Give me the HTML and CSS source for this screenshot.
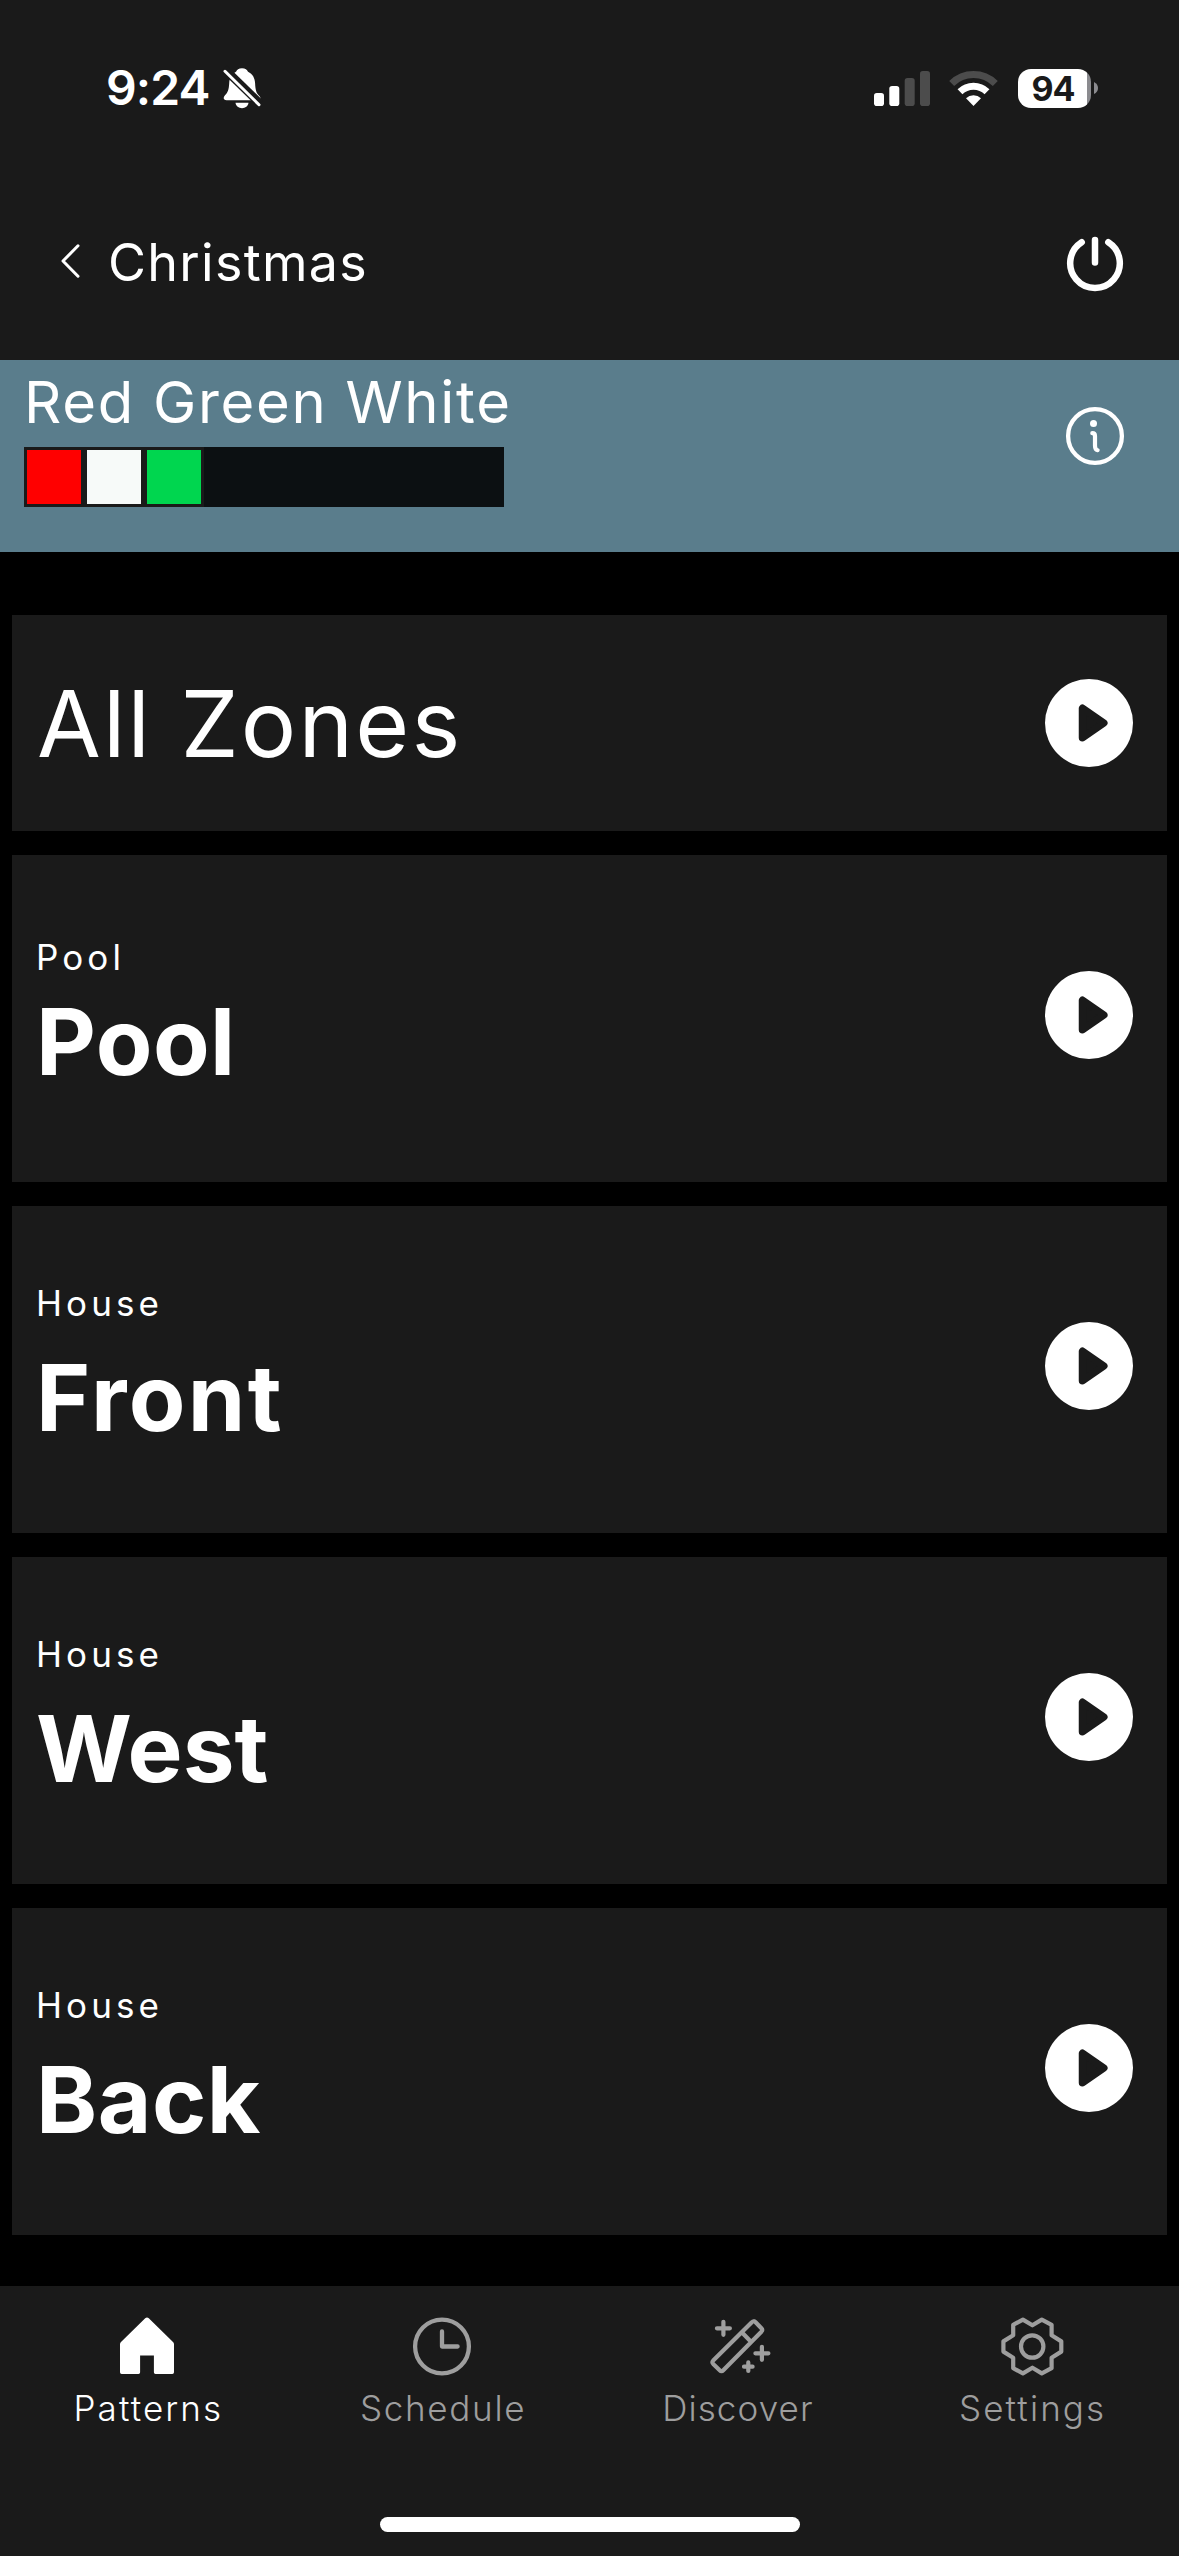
FILE: index.html
```
<!DOCTYPE html>
<html lang="en">
<head>
<meta charset="utf-8">
<title>Christmas – Red Green White</title>
<link rel="stylesheet" href="styles.css">
</head>
<body>
<svg class="defs" aria-hidden="true">
  <symbol id="play" viewBox="0 0 88 88">
    <circle cx="44" cy="44" r="44" fill="#fff"/>
    <path d="M37.500 29.300V58.700L58.800 44Z" fill="#1a1a1a" stroke="#1a1a1a" stroke-width="7.500" stroke-linejoin="round"/>
  </symbol>
</svg>
<div class="screen">
  <div class="status">
    <div class="status-left">
      <span class="time">9:24</span>
      <svg class="bell" viewBox="0 0 38 42">
        <path d="M19 1.2c3.200 0 5.400 1.500 6 3.600 4.700 2.200 6.800 6.300 7.100 11.400.3 7 1.300 9.800 3.800 12.300 2.800 2.900 1.500 4.800-1 4.800H3.600C.6 33.300-.2 30.800 1.800 28.600c2.700-2.800 4.100-5.600 4.400-12.400.3-5.100 2.300-9.200 6.800-11.400.7-2.100 2.800-3.600 6-3.600z" fill="#fff"/>
        <path d="M12.500 35.800h13c-.4 3.300-3.200 5.400-6.500 5.400s-6.100-2.100-6.500-5.400z" fill="#fff"/>
        <path d="M1 1.500L37 36.500" stroke="#1a1a1a" stroke-width="8.500"/>
        <path d="M2 4.300L36 37.700" stroke="#fff" stroke-width="3" stroke-linecap="round"/>
      </svg>
    </div>
    <div class="status-right">
      <svg class="signal" viewBox="0 0 56 35">
        <rect x="0" y="22" width="10" height="13" rx="2.800" fill="#fff"/>
        <rect x="15.300" y="15" width="10" height="20" rx="2.800" fill="#fff"/>
        <rect x="30.700" y="7" width="10" height="28" rx="2.800" fill="#4c4c4c"/>
        <rect x="46" y="0" width="10" height="35" rx="2.800" fill="#4c4c4c"/>
      </svg>
      <svg class="wifi" viewBox="0 0 49 35">
        <path d="M2.700 12.500a31 31 0 0 1 43.600 0" fill="none" stroke="#4c4c4c" stroke-width="7"/>
        <path d="M11 20.800a19.300 19.300 0 0 1 27 0" fill="none" stroke="#fff" stroke-width="7"/>
        <path d="M24.500 35L17 27.300a11 11 0 0 1 15 0z" fill="#fff"/>
      </svg>
      <div class="battery"><span class="level">94</span></div>
      <svg class="battery-cap" viewBox="0 0 4 12"><path d="M0 0q4 2 4 6t-4 6z" fill="#8b8b8f"/></svg>
    </div>
  </div>

  <header class="header">
    <svg class="back" viewBox="0 0 20 34"><path d="M18 .8L3 16l15 15.200" fill="none" stroke="#fff" stroke-width="3" stroke-linecap="round" stroke-linejoin="round"/></svg>
    <h1 class="title">Christmas</h1>
    <svg class="power" viewBox="0 0 58 58"><path d="M15.700 9.200a24.800 24.800 0 1 0 26.600 0M29 7V29.500" fill="none" stroke="#fff" stroke-width="6.500" stroke-linecap="round"/></svg>
  </header>

  <section class="banner">
    <div class="pattern">
      <h2 class="pattern-name">Red Green White</h2>
      <div class="swatches">
        <span class="swatch red"></span><span class="swatch white"></span><span class="swatch green"></span>
      </div>
    </div>
    <svg class="info" viewBox="0 0 58 58">
      <circle cx="29" cy="29" r="26.900" fill="none" stroke="#fff" stroke-width="4.300"/>
      <circle cx="27.500" cy="16.600" r="3.500" fill="#fff"/>
      <path d="M26.300 26.200q2.700 0 2.700 3v9.500q0 4 2.600 4.500" fill="none" stroke="#fff" stroke-width="4.200" stroke-linecap="round"/>
    </svg>
  </section>

  <main class="zones">
    <article class="zone all"><h3 class="all-name">All Zones</h3><svg class="play"><use href="#play"/></svg></article>
    <article class="zone"><div class="text tight"><p class="group">Pool</p><h3 class="name">Pool</h3></div><svg class="play"><use href="#play"/></svg></article>
    <article class="zone"><div class="text"><p class="group">House</p><h3 class="name front">Front</h3></div><svg class="play"><use href="#play"/></svg></article>
    <article class="zone"><div class="text"><p class="group">House</p><h3 class="name west">West</h3></div><svg class="play"><use href="#play"/></svg></article>
    <article class="zone"><div class="text"><p class="group">House</p><h3 class="name">Back</h3></div><svg class="play"><use href="#play"/></svg></article>
  </main>

  <footer class="footer">
    <nav class="tabs">
      <a class="tab active">
        <svg class="icon" viewBox="0 0 60 60"><path d="M28.200 2.200q1.800-1.600 3.600 0L56 26q1 1 1 2.200V56.300q0 1.700-1.700 1.700H38.500q-1.600 0-1.600-1.700V39.500H23.100V56.300q0 1.700-1.600 1.700H4.700Q3 58 3 56.300V28.200Q3 27 4 26z" fill="currentColor"/></svg>
        <span class="tab-label">Patterns</span>
      </a>
      <a class="tab">
        <svg class="icon" viewBox="0 0 60 60"><g fill="none" stroke="currentColor" stroke-width="4.300" stroke-linecap="round" stroke-linejoin="round"><circle cx="30" cy="30.500" r="26.900"/><path d="M30 15.400V30.500H45.600"/></g></svg>
        <span class="tab-label schedule">Schedule</span>
      </a>
      <a class="tab">
        <svg class="icon" viewBox="0 0 60 60"><g fill="none" stroke="currentColor" stroke-width="4.200" stroke-linecap="round" stroke-linejoin="round">
          <path d="M44.800 6.300q1.900-2.100 3.800-.1l5.800 6q1.600 1.700 0 3.500L16.300 54.200q-1.800 1.900-3.600 0L6.200 47.900q-1.500-1.600 0-3.300zM35.500 17l8 8.200"/>
          <path d="M16.400 5.800v13M9.900 12.300h13M54.900 30.800v13M48.400 37.300h13M41.300 46.400v8.600M37 50.700h8.600"/></g></svg>
        <span class="tab-label discover">Discover</span>
      </a>
      <a class="tab">
        <svg class="icon" viewBox="0 0 60 60"><g fill="none" stroke="currentColor" stroke-width="4.200" stroke-linecap="round" stroke-linejoin="round">
          <circle cx="30.200" cy="30.500" r="11.200"/>
          <path d="M20.900 3.600l9.500 5.700 9.400-5.700 9.800 5.200v10.500l9.700 6.100v10.200l-9.700 6.100v10.500l-9.800 5.200-9.400-5.700-9.500 5.700-9.700-5.200V41.700L1.400 35.600V25.400l9.800-6.100V8.800z"/></g></svg>
        <span class="tab-label">Settings</span>
      </a>
    </nav>
    <div class="home-indicator"></div>
  </footer>
</div>
</body>
</html>
```
FILE: styles.css
```
* { box-sizing: border-box; }
body, h1, h2, h3, p { margin: 0; }
body { background: #000; color: #fff; font-family: Inter, "Liberation Sans", sans-serif; }
svg { display: block; flex: none; overflow: visible; }
.defs { position: absolute; width: 0; height: 0; }

.screen { width: 1179px; height: 2556px; display: flex; flex-direction: column; background: #000; white-space: nowrap; }

.status { height: 164px; padding: 12px 81px 0 106px; display: flex; align-items: center; justify-content: space-between; background: #1a1a1a; }
.status-left, .status-right { display: flex; align-items: center; }
.time { width: 117px; font-size: 48px; line-height: 48px; font-weight: 600; letter-spacing: -0.9px; }
.bell { width: 38px; height: 42px; }
.signal { width: 56px; height: 35px; margin-right: 19px; }
.wifi { width: 49px; height: 35px; margin-right: 20px; }
.battery { width: 73px; height: 39px; margin-right: 3px; padding-right: 3px; border-radius: 13px; display: flex; align-items: center; justify-content: center; color: #1a1a1a; background: linear-gradient(90deg, #fff 69px, #8b8b8f 69px); }
.level { font-size: 34px; line-height: 39px; font-weight: 700; letter-spacing: -1px; }
.battery-cap { width: 4px; height: 12px; }

.header { height: 196px; padding: 0 55px 0 60px; display: flex; align-items: center; background: #1a1a1a; }
.back { width: 20px; height: 34px; margin-right: 28px; }
.title { flex: 1; padding-top: 2px; font-size: 52px; line-height: 60px; font-weight: 370; letter-spacing: 1.3px; }
.power { width: 58px; height: 58px; }

.banner { height: 192px; padding: 12px 55px 0 24px; display: flex; justify-content: space-between; background: #5a7d8c; }
.pattern-name { font-size: 58px; line-height: 60px; font-weight: 370; letter-spacing: 1.7px; }
.swatches { width: 480px; height: 60px; margin-top: 15px; display: flex; background: #0c1012; }
.swatch { width: 60px; height: 60px; border: 3px solid #1a1a1a; }
.red { background: #f00; }
.white { background: #f7faf9; }
.green { background: #00d64f; }
.info { width: 58px; height: 58px; margin-top: 35px; }

.zones { flex: 1; padding: 63px 12px 0; display: flex; flex-direction: column; gap: 24px; }
.zone { height: 327px; padding: 0 34px 7px 24px; display: flex; align-items: center; justify-content: space-between; background: #1a1a1a; }
.zone.all { height: 216px; padding-bottom: 0; }
.play { width: 88px; height: 88px; }
.all-name { margin-left: 1px; font-size: 92.5px; line-height: 100px; font-weight: 370; letter-spacing: 2.2px; }
.text { display: flex; flex-direction: column; gap: 24px; padding-bottom: 2px; }
.text.tight { gap: 14px; }
.group { font-size: 35px; line-height: 40px; font-weight: 400; letter-spacing: 4.1px; }
.name { font-size: 92.5px; line-height: 100px; font-weight: 700; letter-spacing: 0.5px; }
.name.front { letter-spacing: 2.4px; }
.name.west { letter-spacing: 0.1px; }

.footer { height: 270px; padding-top: 30px; display: flex; flex-direction: column; align-items: center; background: #1a1a1a; }
.tabs { width: 100%; height: 201px; display: grid; grid-template-columns: repeat(4, 1fr); }
.tab { display: flex; flex-direction: column; align-items: center; gap: 12px; color: #9e9e9e; }
.tab.active { color: #fff; }
.icon { width: 60px; height: 60px; }
.tab-label { font-size: 35px; line-height: 40px; font-weight: 350; letter-spacing: 2.1px; margin-right: -2px; }
.schedule { letter-spacing: 1.7px; }
.discover { letter-spacing: 1.1px; }
.home-indicator { width: 420px; height: 15px; border-radius: 8px; background: #fff; }
```
